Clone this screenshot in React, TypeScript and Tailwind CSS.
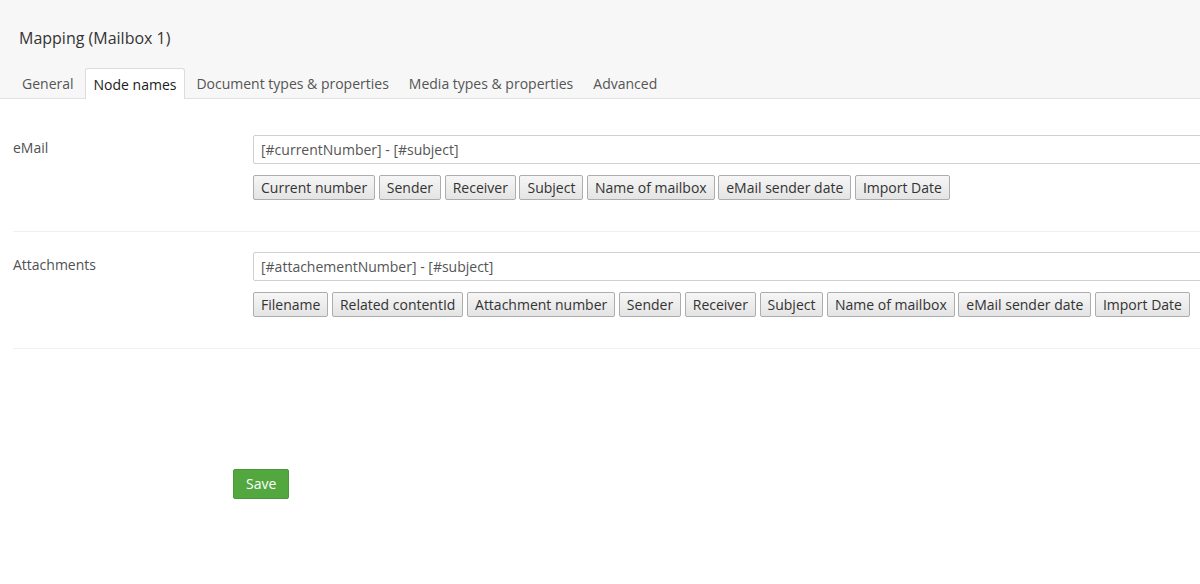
import React from "react";

const emailButtons = ["Current number", "Sender", "Receiver", "Subject", "Name of mailbox", "eMail sender date", "Import Date"];
const attButtons = ["Filename", "Related contentId", "Attachment number", "Sender", "Receiver", "Subject", "Name of mailbox", "eMail sender date", "Import Date"];
const tabs = ["General", "Node names", "Document types & properties", "Media types & properties", "Advanced"];

function Btn({ label }: { label: string }) {
  return (
    <button className="h-[25px] px-[7px] border border-[#adadad] rounded-[2px] bg-gradient-to-b from-[#f6f6f6] to-[#e4e4e4] text-[14px] leading-[23px] text-[#333]">
      {label}
    </button>
  );
}

function Row({ label, value, buttons, second }: { label: string; value: string; buttons: string[]; second?: boolean }) {
  return (
    <div className={second ? "flex pt-[20px] pb-[31px] border-b border-[#f0f0f0]" : "flex pt-[21px] pb-[31px] border-b border-[#f0f0f0]"}>
      <div className="w-[240px] shrink-0 text-[14px] text-[#515151] pt-[3px] leading-[20px]">{label}</div>
      <div className="flex flex-col">
        <div className="w-[970px] h-[29px] border border-[#d0d0d0] rounded-[2px] px-[7px] text-[14px] leading-[27px] text-[#555]">
          {value}
        </div>
        <div className="flex gap-[3.6px] mt-[11px]">
          {buttons.map((b, i) => (
            <Btn key={i} label={b} />
          ))}
        </div>
      </div>
    </div>
  );
}

export default function App() {
  return (
    <div className="w-[1200px] h-[584px] overflow-hidden bg-white" style={{ fontFamily: '"Open Sans", "Liberation Sans", sans-serif' }}>
      <div className="bg-[#f7f7f7] border-b border-[#e0e0e0] h-[99px] flex flex-col">
        <div className="pl-[19px] pt-[27px] text-[16px] leading-[22px] text-[#343434]">Mapping (Mailbox 1)</div>
        <div className="flex gap-[2px] pl-[13px] mt-[19px]">
          {tabs.map((t, i) => (
            <div
              key={i}
              className={
                i === 1
                  ? "h-[31px] px-[8px] text-[14px] leading-[32px] text-[#1b1b1b] bg-white border border-b-0 border-[#dcdcdc] rounded-t-[3px] -mb-[1px]"
                  : "h-[30px] px-[9px] text-[14px] leading-[32px] text-[#555]"
              }
            >
              {t}
            </div>
          ))}
        </div>
      </div>
      <div className="pl-[13px] pt-[15px]">
        <Row label="eMail" value="[#currentNumber] - [#subject]" buttons={emailButtons} />
        <Row label="Attachments" value="[#attachementNumber] - [#subject]" buttons={attButtons} second />
      </div>
      <div className="pl-[233px] pt-[120px]">
        <button className="h-[30px] px-[12px] bg-[#52a83f] border border-[#47993a] rounded-[2px] text-white text-[14px] leading-[28px]">
          Save
        </button>
      </div>
    </div>
  );
}
